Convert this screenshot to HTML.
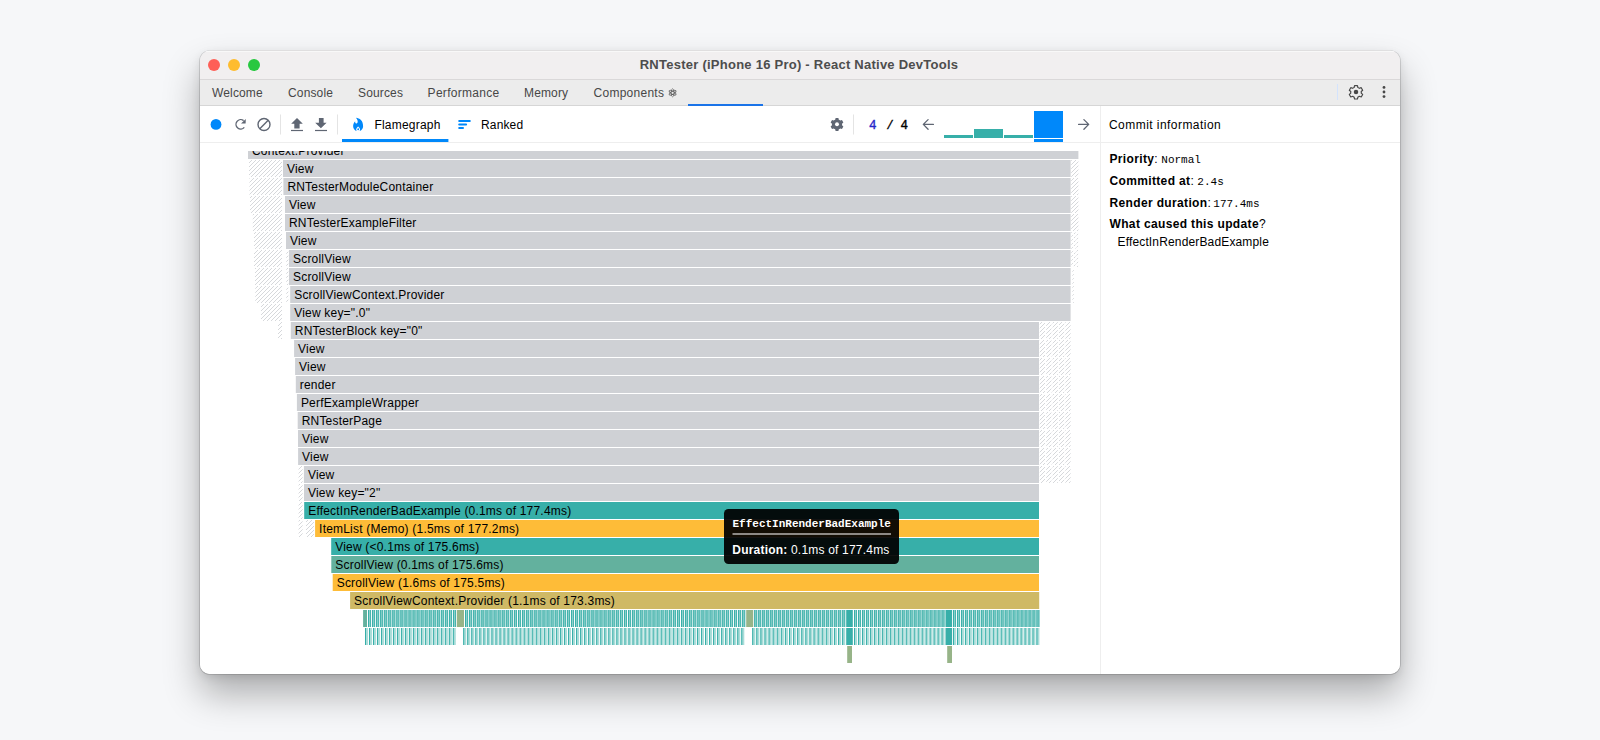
<!DOCTYPE html>
<html><head><meta charset="utf-8"><title>RNTester - React Native DevTools</title>
<style>
html,body{margin:0;padding:0;}
body{width:1600px;height:740px;overflow:hidden;background:#f6f7f9;position:relative;font-family:"Liberation Sans", sans-serif;}
.win{position:absolute;left:200px;top:50.5px;width:1200px;height:623.5px;border-radius:10px;background:#fff;
 box-shadow:0 0 0 0.8px rgba(0,0,0,.16), 0 20px 36px rgba(0,0,0,.30), 0 3px 10px rgba(0,0,0,.10);}
svg.main{position:absolute;left:0;top:0;}
svg text{font-family:"Liberation Sans", sans-serif;}
.fl{font-size:12px;fill:#000;letter-spacing:0.2px;}
.tab{font-size:12px;fill:#474747;letter-spacing:0.15px;}
.tb{font-size:12px;fill:#000;letter-spacing:0.15px;}
.b{font-weight:bold;letter-spacing:0.35px;}
.mono{font-family:"Liberation Mono", monospace;}
</style></head><body>
<div class="win"></div>
<svg class="main" width="1600" height="740" viewBox="0 0 1600 740">
<defs>
<clipPath id="winclip"><rect x="200" y="50.5" width="1200" height="623.5" rx="10" ry="10"/></clipPath>
<pattern id="thin1" patternUnits="userSpaceOnUse" x="363.1" y="0" width="4.05" height="17">
<rect x="0" y="0" width="3.1" height="17" fill="#8fd0cb"/><rect x="0" y="0" width="1" height="17" fill="#37afa9"/><rect x="2.1" y="0" width="1" height="17" fill="#45b4ae"/></pattern>
<pattern id="thin2" patternUnits="userSpaceOnUse" x="365" y="0" width="4.05" height="17">
<rect x="0" y="0" width="3.1" height="17" fill="#b9e3e0"/><rect x="0" y="0" width="1" height="17" fill="#37afa9"/><rect x="2.2" y="0" width="0.9" height="17" fill="#7ccac5"/></pattern>
</defs>
<g clip-path="url(#winclip)">
<!-- title bar -->
<rect x="200" y="50" width="1200" height="29" fill="#f1eff0"/>
<rect x="200" y="51" width="1200" height="0.8" fill="#fbfafb"/>
<rect x="200" y="79" width="1200" height="1" fill="#dad8d9"/>
<circle cx="214" cy="65" r="6" fill="#fe5f57"/>
<circle cx="234" cy="65" r="6" fill="#febc2e"/>
<circle cx="254" cy="65" r="6" fill="#28c840"/>
<text x="799" y="69" text-anchor="middle" font-size="13" font-weight="bold" fill="#4d4d4d" style="letter-spacing:0.25px">RNTester (iPhone 16 Pro) - React Native DevTools</text>
<!-- tab strip -->
<rect x="200" y="80" width="1200" height="25" fill="#ececec"/>
<rect x="200" y="105" width="1200" height="1" fill="#d6d6d6"/>
<text x="212" y="96.5" class="tab">Welcome</text>
<text x="288" y="96.5" class="tab">Console</text>
<text x="358" y="96.5" class="tab">Sources</text>
<text x="427.6" y="96.5" class="tab" style="letter-spacing:0.3px">Performance</text>
<text x="524" y="96.5" class="tab">Memory</text>
<text x="593.6" y="96.5" class="tab" style="letter-spacing:0.25px">Components</text>
<g transform="translate(672.6,92.8)" stroke="#5a5a5a" stroke-width="0.75" fill="none">
<ellipse rx="4" ry="1.5" transform="rotate(90)"/><ellipse rx="4" ry="1.5" transform="rotate(30)"/><ellipse rx="4" ry="1.5" transform="rotate(-30)"/></g>
<rect x="688" y="104" width="75" height="2" fill="#1a73e8"/>
<rect x="1337" y="84" width="1" height="16" fill="#d3e3fd"/>
<!-- settings gear (outline) -->
<g transform="translate(1356,91.9) scale(0.9)">
<path d="M-1.6,-7 h3.2 l0.5,2.1 a5.2,5.2 0 0 1 1.6,0.9 l2.1,-0.7 l1.6,2.8 l-1.6,1.4 a5.2,5.2 0 0 1 0,1.9 l1.6,1.4 l-1.6,2.8 l-2.1,-0.7 a5.2,5.2 0 0 1 -1.6,0.9 l-0.5,2.1 h-3.2 l-0.5,-2.1 a5.2,5.2 0 0 1 -1.6,-0.9 l-2.1,0.7 l-1.6,-2.8 l1.6,-1.4 a5.2,5.2 0 0 1 0,-1.9 l-1.6,-1.4 l1.6,-2.8 l2.1,0.7 a5.2,5.2 0 0 1 1.6,-0.9 z" fill="none" stroke="#474747" stroke-width="1.3" stroke-linejoin="round"/>
<circle r="2.5" fill="#474747"/></g>
<circle cx="1384" cy="87.4" r="1.4" fill="#474747"/>
<circle cx="1384" cy="92" r="1.4" fill="#474747"/>
<circle cx="1384" cy="96.6" r="1.4" fill="#474747"/>
<!-- content bg -->
<rect x="200" y="106" width="1200" height="568" fill="#fff"/>
<rect x="200" y="142" width="1200" height="1" fill="#eeeeee"/>
<rect x="1100" y="106" width="1" height="568" fill="#eeeeee"/>
<!-- toolbar -->
<circle cx="216" cy="124.4" r="5.4" fill="#0088fa"/>
<g fill="none" stroke="#5f6673" stroke-width="1.4">
<path d="M243.6,120.6 A4.7,4.7 0 1 0 244.3,127.4"/>
</g>
<path d="M245.8,118.9 L245.6,123.6 L241,123.6 Z" fill="#5f6673"/>
<g fill="none" stroke="#5f6673" stroke-width="1.4">
<circle cx="264" cy="124.5" r="6"/>
<path d="M268.2,120.3 L259.8,128.7"/>
</g>
<rect x="280" y="114.5" width="1" height="20" fill="#e4e4e4"/>
<g fill="#5f6673"><path d="M291.2,123.8 L297,118 L302.8,123.8 H299.6 V128.6 H294.3 V123.8 Z"/><rect x="291" y="129.9" width="12" height="1.2"/>
<path d="M318.9,118 H323.6 V122.8 H326.6 L320.9,128.2 L315.2,122.8 H318.9 Z"/><rect x="315" y="129.9" width="12" height="1.2"/></g>
<rect x="337" y="114.5" width="1" height="20" fill="#e4e4e4"/>
<g transform="translate(349.6,116.1) scale(0.71,0.69)" fill="#0088fa"><path d="M10.0650893,21.5040462 C7.14020814,20.6850349 5,18.0558698 5,14.9390244 C5,14.017627 5,9.81707317 7.83333333,7.37804878 C7.83333333,7.37804878 7.58333333,11.199187 10,10.6300813 C11.125,10.326087 13.0062497,7.63043487 8.91666667,2.5 C14.1666667,3.06910569 19,6.10431725 19,14.9390244 C19,18.0558698 16.8597919,20.6850349 13.9349107,21.5040462 C14.454014,21.0118505 14.7765152,20.3233394 14.7765152,19.5613412 C14.7765152,17.2826087 12,15.0875871 12,15.0875871 C12,15.0875871 9.22348485,17.2826087 9.22348485,19.5613412 C9.22348485,20.3233394 9.54598603,21.0118505 10.0650893,21.5040462 Z M12.0833333,20.6514763 C11.3814715,20.6514763 10.8125,20.1226027 10.8125,19.4702042 C10.8125,18.6069669 12.0833333,16.9347829 12.0833333,16.9347829 C12.0833333,16.9347829 13.3541667,18.6069669 13.3541667,19.4702042 C13.3541667,20.1226027 12.7851952,20.6514763 12.0833333,20.6514763 Z"/></g>
<text x="374.4" y="128.8" class="tb" style="letter-spacing:0.22px">Flamegraph</text>
<rect x="342" y="139" width="106.4" height="3" fill="#0088fa"/>
<g fill="#0088fa">
<rect x="458.2" y="119.9" width="12.6" height="2" rx="1"/>
<rect x="458.2" y="123.4" width="8.9" height="2" rx="1"/>
<rect x="458.2" y="127" width="5.8" height="2" rx="1"/>
</g>
<text x="481" y="128.8" class="tb">Ranked</text>
<!-- right toolbar -->
<g transform="translate(837,124.2) scale(0.93)">
<path d="M-1.5,-6.6 h3 l0.45,1.9 a4.9,4.9 0 0 1 1.5,0.85 l1.9,-0.6 l1.5,2.6 l-1.45,1.3 a4.9,4.9 0 0 1 0,1.75 l1.45,1.3 l-1.5,2.6 l-1.9,-0.6 a4.9,4.9 0 0 1 -1.5,0.85 l-0.45,1.9 h-3 l-0.45,-1.9 a4.9,4.9 0 0 1 -1.5,-0.85 l-1.9,0.6 l-1.5,-2.6 l1.45,-1.3 a4.9,4.9 0 0 1 0,-1.75 l-1.45,-1.3 l1.5,-2.6 l1.9,0.6 a4.9,4.9 0 0 1 1.5,-0.85 z" fill="#5f6673"/>
<circle r="2.1" fill="#fff"/></g>
<rect x="853" y="114.5" width="1" height="20" fill="#e4e4e4"/>
<text x="868.9" y="128.9" class="mono" font-size="12.5" fill="#2626c9" stroke="#2626c9" stroke-width="0.35">4</text>
<text x="886.2" y="129.4" class="mono" font-size="12.5" fill="#000" stroke="#000" stroke-width="0.3">/</text>
<text x="900.6" y="128.9" class="mono" font-size="12.5" fill="#000" stroke="#000" stroke-width="0.35">4</text>
<g fill="none" stroke="#5f6673" stroke-width="1.3" stroke-linecap="round" stroke-linejoin="round">
<path d="M933.4,124.4 H923.4 M928.1,119.6 L923.3,124.4 L928.1,129.2"/>
<path d="M1078.6,124.4 H1088.6 M1083.9,119.6 L1088.7,124.4 L1083.9,129.2"/>
</g>
<rect x="944" y="135" width="29" height="3" fill="#37afa9"/>
<rect x="974" y="129" width="29" height="9" fill="#37afa9"/>
<rect x="1004" y="135" width="29" height="3" fill="#37afa9"/>
<rect x="1034" y="111" width="29" height="27" fill="#0088fa"/>
<rect x="1034" y="139" width="29" height="3" fill="#0088fa"/>
<!-- right panel -->
<text x="1109" y="129" class="tb" style="letter-spacing:0.45px">Commit information</text>
<text x="1109.5" y="162.5" class="tb"><tspan class="b">Priority</tspan>: <tspan class="mono" font-size="11" style="letter-spacing:0">Normal</tspan></text>
<text x="1109.5" y="184.5" class="tb"><tspan class="b">Committed at</tspan>: <tspan class="mono" font-size="11" style="letter-spacing:0">2.4s</tspan></text>
<text x="1109.5" y="206.5" class="tb"><tspan class="b">Render duration</tspan>:<tspan class="mono" font-size="11" style="letter-spacing:0" dx="2.4">177.4ms</tspan></text>
<text x="1109.5" y="228" class="tb"><tspan class="b">What caused this update</tspan>?</text>
<text x="1117.5" y="246" class="tb">EffectInRenderBadExample</text>
<defs><pattern id="hp" patternUnits="userSpaceOnUse" width="4" height="4"><path d="M-1,1 l2,-2 M0,4 l4,-4 M3,5 l2,-2" stroke="#d6d8db" stroke-width="1"/></pattern><clipPath id="fgclip"><rect x="200" y="151" width="900" height="523"/></clipPath></defs>
<g clip-path="url(#fgclip)">
<rect x="249" y="160" width="33.00" height="17" fill="url(#hp)"/>
<rect x="249.5" y="178" width="32.50" height="17" fill="url(#hp)"/>
<rect x="250" y="196" width="32.00" height="17" fill="url(#hp)"/>
<rect x="252.8" y="214" width="29.20" height="17" fill="url(#hp)"/>
<rect x="254" y="232" width="28.00" height="17" fill="url(#hp)"/>
<rect x="254" y="250" width="28.00" height="17" fill="url(#hp)"/>
<rect x="255" y="268" width="27.00" height="17" fill="url(#hp)"/>
<rect x="255.3" y="286" width="26.70" height="17" fill="url(#hp)"/>
<rect x="261" y="304" width="21.00" height="17" fill="url(#hp)"/>
<rect x="278" y="322" width="4.00" height="17" fill="url(#hp)"/>
<rect x="286.3" y="250" width="2.00" height="17" fill="url(#hp)"/>
<rect x="286.3" y="268" width="2.00" height="17" fill="url(#hp)"/>
<rect x="286.3" y="286" width="2.00" height="17" fill="url(#hp)"/>
<rect x="1071.2" y="160" width="7.20" height="17" fill="url(#hp)"/>
<rect x="1071.2" y="178" width="7.20" height="17" fill="url(#hp)"/>
<rect x="1071.2" y="196" width="7.20" height="17" fill="url(#hp)"/>
<rect x="1071.2" y="214" width="7.20" height="17" fill="url(#hp)"/>
<rect x="1071.3" y="232" width="1.60" height="17" fill="url(#hp)"/>
<rect x="1073.9" y="232" width="1.60" height="17" fill="url(#hp)"/>
<rect x="1076.5" y="232" width="1.60" height="17" fill="url(#hp)"/>
<rect x="1071.3" y="250" width="1.60" height="17" fill="url(#hp)"/>
<rect x="1073.9" y="250" width="1.60" height="17" fill="url(#hp)"/>
<rect x="1076.5" y="250" width="1.60" height="17" fill="url(#hp)"/>
<rect x="1072.4" y="268" width="1.40" height="17" fill="url(#hp)"/>
<rect x="1072.4" y="286" width="1.40" height="17" fill="url(#hp)"/>
<rect x="1039.8" y="322" width="5.20" height="17" fill="url(#hp)"/>
<rect x="1046.2" y="322" width="5.20" height="17" fill="url(#hp)"/>
<rect x="1052.6" y="322" width="5.20" height="17" fill="url(#hp)"/>
<rect x="1059" y="322" width="5.20" height="17" fill="url(#hp)"/>
<rect x="1065.4" y="322" width="5.20" height="17" fill="url(#hp)"/>
<rect x="1039.8" y="340" width="5.20" height="17" fill="url(#hp)"/>
<rect x="1046.2" y="340" width="5.20" height="17" fill="url(#hp)"/>
<rect x="1052.6" y="340" width="5.20" height="17" fill="url(#hp)"/>
<rect x="1059" y="340" width="5.20" height="17" fill="url(#hp)"/>
<rect x="1065.4" y="340" width="5.20" height="17" fill="url(#hp)"/>
<rect x="1039.8" y="358" width="5.20" height="17" fill="url(#hp)"/>
<rect x="1046.2" y="358" width="5.20" height="17" fill="url(#hp)"/>
<rect x="1052.6" y="358" width="5.20" height="17" fill="url(#hp)"/>
<rect x="1059" y="358" width="5.20" height="17" fill="url(#hp)"/>
<rect x="1065.4" y="358" width="5.20" height="17" fill="url(#hp)"/>
<rect x="1039.8" y="376" width="5.20" height="17" fill="url(#hp)"/>
<rect x="1046.2" y="376" width="5.20" height="17" fill="url(#hp)"/>
<rect x="1052.6" y="376" width="5.20" height="17" fill="url(#hp)"/>
<rect x="1059" y="376" width="5.20" height="17" fill="url(#hp)"/>
<rect x="1065.4" y="376" width="5.20" height="17" fill="url(#hp)"/>
<rect x="1039.8" y="394" width="5.20" height="17" fill="url(#hp)"/>
<rect x="1046.2" y="394" width="5.20" height="17" fill="url(#hp)"/>
<rect x="1052.6" y="394" width="5.20" height="17" fill="url(#hp)"/>
<rect x="1059" y="394" width="5.20" height="17" fill="url(#hp)"/>
<rect x="1065.4" y="394" width="5.20" height="17" fill="url(#hp)"/>
<rect x="1039.8" y="412" width="5.20" height="17" fill="url(#hp)"/>
<rect x="1046.2" y="412" width="5.20" height="17" fill="url(#hp)"/>
<rect x="1052.6" y="412" width="5.20" height="17" fill="url(#hp)"/>
<rect x="1059" y="412" width="5.20" height="17" fill="url(#hp)"/>
<rect x="1065.4" y="412" width="5.20" height="17" fill="url(#hp)"/>
<rect x="1039.8" y="430" width="5.20" height="17" fill="url(#hp)"/>
<rect x="1046.2" y="430" width="5.20" height="17" fill="url(#hp)"/>
<rect x="1052.6" y="430" width="5.20" height="17" fill="url(#hp)"/>
<rect x="1059" y="430" width="5.20" height="17" fill="url(#hp)"/>
<rect x="1065.4" y="430" width="5.20" height="17" fill="url(#hp)"/>
<rect x="1039.8" y="448" width="5.20" height="17" fill="url(#hp)"/>
<rect x="1046.2" y="448" width="5.20" height="17" fill="url(#hp)"/>
<rect x="1052.6" y="448" width="5.20" height="17" fill="url(#hp)"/>
<rect x="1059" y="448" width="5.20" height="17" fill="url(#hp)"/>
<rect x="1065.4" y="448" width="5.20" height="17" fill="url(#hp)"/>
<rect x="1039.8" y="466" width="5.20" height="17" fill="url(#hp)"/>
<rect x="1046.2" y="466" width="5.20" height="17" fill="url(#hp)"/>
<rect x="1052.6" y="466" width="5.20" height="17" fill="url(#hp)"/>
<rect x="1059" y="466" width="5.20" height="17" fill="url(#hp)"/>
<rect x="1065.4" y="466" width="5.20" height="17" fill="url(#hp)"/>
<rect x="298.6" y="466" width="4.00" height="17" fill="url(#hp)"/>
<rect x="298.6" y="484" width="4.00" height="17" fill="url(#hp)"/>
<rect x="298.6" y="502" width="4.00" height="17" fill="url(#hp)"/>
<rect x="298.6" y="520" width="4.00" height="17" fill="url(#hp)"/>
<rect x="306" y="520" width="8.00" height="17" fill="url(#hp)"/>
<rect x="248" y="142" width="830.40" height="17" fill="#cfd1d5"/>
<text x="252.00" y="154.60" class="fl">Context.Provider</text>
<rect x="283" y="160" width="787.60" height="17" fill="#cfd1d5"/>
<text x="287.00" y="172.60" class="fl">View</text>
<rect x="283.4" y="178" width="787.20" height="17" fill="#cfd1d5"/>
<text x="287.40" y="190.60" class="fl">RNTesterModuleContainer</text>
<rect x="285" y="196" width="785.60" height="17" fill="#cfd1d5"/>
<text x="289.00" y="208.60" class="fl">View</text>
<rect x="285" y="214" width="785.60" height="17" fill="#cfd1d5"/>
<text x="289.00" y="226.60" class="fl">RNTesterExampleFilter</text>
<rect x="286" y="232" width="784.60" height="17" fill="#cfd1d5"/>
<text x="290.00" y="244.60" class="fl">View</text>
<rect x="289" y="250" width="781.60" height="17" fill="#cfd1d5"/>
<text x="293.00" y="262.60" class="fl">ScrollView</text>
<rect x="289" y="268" width="781.60" height="17" fill="#cfd1d5"/>
<text x="293.00" y="280.60" class="fl">ScrollView</text>
<rect x="290.2" y="286" width="780.40" height="17" fill="#cfd1d5"/>
<text x="294.20" y="298.60" class="fl">ScrollViewContext.Provider</text>
<rect x="290.2" y="304" width="780.40" height="17" fill="#cfd1d5"/>
<text x="294.20" y="316.60" class="fl">View key=&quot;.0&quot;</text>
<rect x="290.8" y="322" width="748.20" height="17" fill="#cfd1d5"/>
<text x="294.80" y="334.60" class="fl">RNTesterBlock key=&quot;0&quot;</text>
<rect x="294.1" y="340" width="744.90" height="17" fill="#cfd1d5"/>
<text x="298.10" y="352.60" class="fl">View</text>
<rect x="295.1" y="358" width="743.90" height="17" fill="#cfd1d5"/>
<text x="299.10" y="370.60" class="fl">View</text>
<rect x="295.8" y="376" width="743.20" height="17" fill="#cfd1d5"/>
<text x="299.80" y="388.60" class="fl">render</text>
<rect x="296.9" y="394" width="742.10" height="17" fill="#cfd1d5"/>
<text x="300.90" y="406.60" class="fl">PerfExampleWrapper</text>
<rect x="297.7" y="412" width="741.30" height="17" fill="#cfd1d5"/>
<text x="301.70" y="424.60" class="fl">RNTesterPage</text>
<rect x="298" y="430" width="741.00" height="17" fill="#cfd1d5"/>
<text x="302.00" y="442.60" class="fl">View</text>
<rect x="298.1" y="448" width="740.90" height="17" fill="#cfd1d5"/>
<text x="302.10" y="460.60" class="fl">View</text>
<rect x="303.9" y="466" width="735.10" height="17" fill="#cfd1d5"/>
<text x="307.90" y="478.60" class="fl">View</text>
<rect x="304" y="484" width="735.00" height="17" fill="#cfd1d5"/>
<text x="308.00" y="496.60" class="fl">View key=&quot;2&quot;</text>
<rect x="304.2" y="502" width="734.80" height="17" fill="#37afa9"/>
<text x="308.20" y="514.60" class="fl">EffectInRenderBadExample (0.1ms of 177.4ms)</text>
<rect x="315.1" y="520" width="723.90" height="17" fill="#febc38"/>
<text x="319.10" y="532.60" class="fl">ItemList (Memo) (1.5ms of 177.2ms)</text>
<rect x="331.2" y="538" width="707.80" height="17" fill="#37afa9"/>
<text x="335.20" y="550.60" class="fl">View (&lt;0.1ms of 175.6ms)</text>
<rect x="331.3" y="556" width="707.70" height="17" fill="#63b19e"/>
<text x="335.30" y="568.60" class="fl">ScrollView (0.1ms of 175.6ms)</text>
<rect x="332.7" y="574" width="706.30" height="17" fill="#febc38"/>
<text x="336.70" y="586.60" class="fl">ScrollView (1.6ms of 175.5ms)</text>
<rect x="350.1" y="592" width="689.10" height="17" fill="#cfb965"/>
<text x="354.10" y="604.60" class="fl">ScrollViewContext.Provider (1.1ms of 173.3ms)</text>
<rect x="368.00" y="610" width="3.05" height="17" fill="#8fd0cb"/>
<rect x="368.00" y="610" width="1" height="17" fill="#37afa9"/>
<rect x="370.05" y="610" width="1" height="17" fill="#45b4ae"/>
<rect x="372.05" y="610" width="3.05" height="17" fill="#8fd0cb"/>
<rect x="372.05" y="610" width="1" height="17" fill="#37afa9"/>
<rect x="374.09" y="610" width="1" height="17" fill="#45b4ae"/>
<rect x="376.09" y="610" width="3.05" height="17" fill="#8fd0cb"/>
<rect x="376.09" y="610" width="1" height="17" fill="#37afa9"/>
<rect x="378.14" y="610" width="1" height="17" fill="#45b4ae"/>
<rect x="380.14" y="610" width="3.05" height="17" fill="#8fd0cb"/>
<rect x="380.14" y="610" width="1" height="17" fill="#37afa9"/>
<rect x="382.18" y="610" width="1" height="17" fill="#45b4ae"/>
<rect x="384.18" y="610" width="3.05" height="17" fill="#8fd0cb"/>
<rect x="384.18" y="610" width="1" height="17" fill="#37afa9"/>
<rect x="386.23" y="610" width="1" height="17" fill="#45b4ae"/>
<rect x="388.23" y="610" width="3.05" height="17" fill="#8fd0cb"/>
<rect x="388.23" y="610" width="1" height="17" fill="#37afa9"/>
<rect x="390.27" y="610" width="1" height="17" fill="#45b4ae"/>
<rect x="392.27" y="610" width="3.05" height="17" fill="#8fd0cb"/>
<rect x="392.27" y="610" width="1" height="17" fill="#37afa9"/>
<rect x="394.32" y="610" width="1" height="17" fill="#45b4ae"/>
<rect x="396.32" y="610" width="3.05" height="17" fill="#8fd0cb"/>
<rect x="396.32" y="610" width="1" height="17" fill="#37afa9"/>
<rect x="398.36" y="610" width="1" height="17" fill="#45b4ae"/>
<rect x="400.36" y="610" width="3.05" height="17" fill="#8fd0cb"/>
<rect x="400.36" y="610" width="1" height="17" fill="#37afa9"/>
<rect x="402.41" y="610" width="1" height="17" fill="#45b4ae"/>
<rect x="404.41" y="610" width="3.05" height="17" fill="#8fd0cb"/>
<rect x="404.41" y="610" width="1" height="17" fill="#37afa9"/>
<rect x="406.45" y="610" width="1" height="17" fill="#45b4ae"/>
<rect x="408.45" y="610" width="3.05" height="17" fill="#8fd0cb"/>
<rect x="408.45" y="610" width="1" height="17" fill="#37afa9"/>
<rect x="410.50" y="610" width="1" height="17" fill="#45b4ae"/>
<rect x="412.50" y="610" width="3.05" height="17" fill="#8fd0cb"/>
<rect x="412.50" y="610" width="1" height="17" fill="#37afa9"/>
<rect x="414.55" y="610" width="1" height="17" fill="#45b4ae"/>
<rect x="416.55" y="610" width="3.05" height="17" fill="#8fd0cb"/>
<rect x="416.55" y="610" width="1" height="17" fill="#37afa9"/>
<rect x="418.59" y="610" width="1" height="17" fill="#45b4ae"/>
<rect x="420.59" y="610" width="3.05" height="17" fill="#8fd0cb"/>
<rect x="420.59" y="610" width="1" height="17" fill="#37afa9"/>
<rect x="422.64" y="610" width="1" height="17" fill="#45b4ae"/>
<rect x="424.64" y="610" width="3.05" height="17" fill="#8fd0cb"/>
<rect x="424.64" y="610" width="1" height="17" fill="#37afa9"/>
<rect x="426.68" y="610" width="1" height="17" fill="#45b4ae"/>
<rect x="428.68" y="610" width="3.05" height="17" fill="#8fd0cb"/>
<rect x="428.68" y="610" width="1" height="17" fill="#37afa9"/>
<rect x="430.73" y="610" width="1" height="17" fill="#45b4ae"/>
<rect x="432.73" y="610" width="3.05" height="17" fill="#8fd0cb"/>
<rect x="432.73" y="610" width="1" height="17" fill="#37afa9"/>
<rect x="434.77" y="610" width="1" height="17" fill="#45b4ae"/>
<rect x="436.77" y="610" width="3.05" height="17" fill="#8fd0cb"/>
<rect x="436.77" y="610" width="1" height="17" fill="#37afa9"/>
<rect x="438.82" y="610" width="1" height="17" fill="#45b4ae"/>
<rect x="440.82" y="610" width="3.05" height="17" fill="#8fd0cb"/>
<rect x="440.82" y="610" width="1" height="17" fill="#37afa9"/>
<rect x="442.86" y="610" width="1" height="17" fill="#45b4ae"/>
<rect x="444.86" y="610" width="3.05" height="17" fill="#8fd0cb"/>
<rect x="444.86" y="610" width="1" height="17" fill="#37afa9"/>
<rect x="446.91" y="610" width="1" height="17" fill="#45b4ae"/>
<rect x="448.91" y="610" width="3.05" height="17" fill="#8fd0cb"/>
<rect x="448.91" y="610" width="1" height="17" fill="#37afa9"/>
<rect x="450.95" y="610" width="1" height="17" fill="#45b4ae"/>
<rect x="452.95" y="610" width="3.05" height="17" fill="#8fd0cb"/>
<rect x="452.95" y="610" width="1" height="17" fill="#37afa9"/>
<rect x="455.00" y="610" width="1" height="17" fill="#45b4ae"/>
<rect x="465.00" y="610" width="3.08" height="17" fill="#8fd0cb"/>
<rect x="465.00" y="610" width="1" height="17" fill="#37afa9"/>
<rect x="467.08" y="610" width="1" height="17" fill="#45b4ae"/>
<rect x="469.08" y="610" width="3.08" height="17" fill="#8fd0cb"/>
<rect x="469.08" y="610" width="1" height="17" fill="#37afa9"/>
<rect x="471.15" y="610" width="1" height="17" fill="#45b4ae"/>
<rect x="473.15" y="610" width="3.08" height="17" fill="#8fd0cb"/>
<rect x="473.15" y="610" width="1" height="17" fill="#37afa9"/>
<rect x="475.23" y="610" width="1" height="17" fill="#45b4ae"/>
<rect x="477.23" y="610" width="3.08" height="17" fill="#8fd0cb"/>
<rect x="477.23" y="610" width="1" height="17" fill="#37afa9"/>
<rect x="479.30" y="610" width="1" height="17" fill="#45b4ae"/>
<rect x="481.30" y="610" width="3.08" height="17" fill="#8fd0cb"/>
<rect x="481.30" y="610" width="1" height="17" fill="#37afa9"/>
<rect x="483.38" y="610" width="1" height="17" fill="#45b4ae"/>
<rect x="485.38" y="610" width="3.08" height="17" fill="#8fd0cb"/>
<rect x="485.38" y="610" width="1" height="17" fill="#37afa9"/>
<rect x="487.45" y="610" width="1" height="17" fill="#45b4ae"/>
<rect x="489.45" y="610" width="3.08" height="17" fill="#8fd0cb"/>
<rect x="489.45" y="610" width="1" height="17" fill="#37afa9"/>
<rect x="491.53" y="610" width="1" height="17" fill="#45b4ae"/>
<rect x="493.53" y="610" width="3.08" height="17" fill="#8fd0cb"/>
<rect x="493.53" y="610" width="1" height="17" fill="#37afa9"/>
<rect x="495.60" y="610" width="1" height="17" fill="#45b4ae"/>
<rect x="497.60" y="610" width="3.08" height="17" fill="#8fd0cb"/>
<rect x="497.60" y="610" width="1" height="17" fill="#37afa9"/>
<rect x="499.68" y="610" width="1" height="17" fill="#45b4ae"/>
<rect x="501.68" y="610" width="3.08" height="17" fill="#8fd0cb"/>
<rect x="501.68" y="610" width="1" height="17" fill="#37afa9"/>
<rect x="503.75" y="610" width="1" height="17" fill="#45b4ae"/>
<rect x="505.75" y="610" width="3.08" height="17" fill="#8fd0cb"/>
<rect x="505.75" y="610" width="1" height="17" fill="#37afa9"/>
<rect x="507.83" y="610" width="1" height="17" fill="#45b4ae"/>
<rect x="509.83" y="610" width="3.08" height="17" fill="#8fd0cb"/>
<rect x="509.83" y="610" width="1" height="17" fill="#37afa9"/>
<rect x="511.90" y="610" width="1" height="17" fill="#45b4ae"/>
<rect x="513.90" y="610" width="3.08" height="17" fill="#8fd0cb"/>
<rect x="513.90" y="610" width="1" height="17" fill="#37afa9"/>
<rect x="515.98" y="610" width="1" height="17" fill="#45b4ae"/>
<rect x="517.98" y="610" width="3.08" height="17" fill="#8fd0cb"/>
<rect x="517.98" y="610" width="1" height="17" fill="#37afa9"/>
<rect x="520.06" y="610" width="1" height="17" fill="#45b4ae"/>
<rect x="522.06" y="610" width="3.08" height="17" fill="#8fd0cb"/>
<rect x="522.06" y="610" width="1" height="17" fill="#37afa9"/>
<rect x="524.13" y="610" width="1" height="17" fill="#45b4ae"/>
<rect x="526.13" y="610" width="3.08" height="17" fill="#8fd0cb"/>
<rect x="526.13" y="610" width="1" height="17" fill="#37afa9"/>
<rect x="528.21" y="610" width="1" height="17" fill="#45b4ae"/>
<rect x="530.21" y="610" width="3.08" height="17" fill="#8fd0cb"/>
<rect x="530.21" y="610" width="1" height="17" fill="#37afa9"/>
<rect x="532.28" y="610" width="1" height="17" fill="#45b4ae"/>
<rect x="534.28" y="610" width="3.08" height="17" fill="#8fd0cb"/>
<rect x="534.28" y="610" width="1" height="17" fill="#37afa9"/>
<rect x="536.36" y="610" width="1" height="17" fill="#45b4ae"/>
<rect x="538.36" y="610" width="3.08" height="17" fill="#8fd0cb"/>
<rect x="538.36" y="610" width="1" height="17" fill="#37afa9"/>
<rect x="540.43" y="610" width="1" height="17" fill="#45b4ae"/>
<rect x="542.43" y="610" width="3.08" height="17" fill="#8fd0cb"/>
<rect x="542.43" y="610" width="1" height="17" fill="#37afa9"/>
<rect x="544.51" y="610" width="1" height="17" fill="#45b4ae"/>
<rect x="546.51" y="610" width="3.08" height="17" fill="#8fd0cb"/>
<rect x="546.51" y="610" width="1" height="17" fill="#37afa9"/>
<rect x="548.58" y="610" width="1" height="17" fill="#45b4ae"/>
<rect x="550.58" y="610" width="3.08" height="17" fill="#8fd0cb"/>
<rect x="550.58" y="610" width="1" height="17" fill="#37afa9"/>
<rect x="552.66" y="610" width="1" height="17" fill="#45b4ae"/>
<rect x="554.66" y="610" width="3.08" height="17" fill="#8fd0cb"/>
<rect x="554.66" y="610" width="1" height="17" fill="#37afa9"/>
<rect x="556.73" y="610" width="1" height="17" fill="#45b4ae"/>
<rect x="558.73" y="610" width="3.08" height="17" fill="#8fd0cb"/>
<rect x="558.73" y="610" width="1" height="17" fill="#37afa9"/>
<rect x="560.81" y="610" width="1" height="17" fill="#45b4ae"/>
<rect x="562.81" y="610" width="3.08" height="17" fill="#8fd0cb"/>
<rect x="562.81" y="610" width="1" height="17" fill="#37afa9"/>
<rect x="564.88" y="610" width="1" height="17" fill="#45b4ae"/>
<rect x="566.88" y="610" width="3.08" height="17" fill="#8fd0cb"/>
<rect x="566.88" y="610" width="1" height="17" fill="#37afa9"/>
<rect x="568.96" y="610" width="1" height="17" fill="#45b4ae"/>
<rect x="570.96" y="610" width="3.08" height="17" fill="#8fd0cb"/>
<rect x="570.96" y="610" width="1" height="17" fill="#37afa9"/>
<rect x="573.03" y="610" width="1" height="17" fill="#45b4ae"/>
<rect x="575.03" y="610" width="3.08" height="17" fill="#8fd0cb"/>
<rect x="575.03" y="610" width="1" height="17" fill="#37afa9"/>
<rect x="577.11" y="610" width="1" height="17" fill="#45b4ae"/>
<rect x="579.11" y="610" width="3.08" height="17" fill="#8fd0cb"/>
<rect x="579.11" y="610" width="1" height="17" fill="#37afa9"/>
<rect x="581.19" y="610" width="1" height="17" fill="#45b4ae"/>
<rect x="583.19" y="610" width="3.08" height="17" fill="#8fd0cb"/>
<rect x="583.19" y="610" width="1" height="17" fill="#37afa9"/>
<rect x="585.26" y="610" width="1" height="17" fill="#45b4ae"/>
<rect x="587.26" y="610" width="3.08" height="17" fill="#8fd0cb"/>
<rect x="587.26" y="610" width="1" height="17" fill="#37afa9"/>
<rect x="589.34" y="610" width="1" height="17" fill="#45b4ae"/>
<rect x="591.34" y="610" width="3.08" height="17" fill="#8fd0cb"/>
<rect x="591.34" y="610" width="1" height="17" fill="#37afa9"/>
<rect x="593.41" y="610" width="1" height="17" fill="#45b4ae"/>
<rect x="595.41" y="610" width="3.08" height="17" fill="#8fd0cb"/>
<rect x="595.41" y="610" width="1" height="17" fill="#37afa9"/>
<rect x="597.49" y="610" width="1" height="17" fill="#45b4ae"/>
<rect x="599.49" y="610" width="3.08" height="17" fill="#8fd0cb"/>
<rect x="599.49" y="610" width="1" height="17" fill="#37afa9"/>
<rect x="601.56" y="610" width="1" height="17" fill="#45b4ae"/>
<rect x="603.56" y="610" width="3.08" height="17" fill="#8fd0cb"/>
<rect x="603.56" y="610" width="1" height="17" fill="#37afa9"/>
<rect x="605.64" y="610" width="1" height="17" fill="#45b4ae"/>
<rect x="607.64" y="610" width="3.08" height="17" fill="#8fd0cb"/>
<rect x="607.64" y="610" width="1" height="17" fill="#37afa9"/>
<rect x="609.71" y="610" width="1" height="17" fill="#45b4ae"/>
<rect x="611.71" y="610" width="3.08" height="17" fill="#8fd0cb"/>
<rect x="611.71" y="610" width="1" height="17" fill="#37afa9"/>
<rect x="613.79" y="610" width="1" height="17" fill="#45b4ae"/>
<rect x="615.79" y="610" width="3.08" height="17" fill="#8fd0cb"/>
<rect x="615.79" y="610" width="1" height="17" fill="#37afa9"/>
<rect x="617.86" y="610" width="1" height="17" fill="#45b4ae"/>
<rect x="619.86" y="610" width="3.08" height="17" fill="#8fd0cb"/>
<rect x="619.86" y="610" width="1" height="17" fill="#37afa9"/>
<rect x="621.94" y="610" width="1" height="17" fill="#45b4ae"/>
<rect x="623.94" y="610" width="3.08" height="17" fill="#8fd0cb"/>
<rect x="623.94" y="610" width="1" height="17" fill="#37afa9"/>
<rect x="626.01" y="610" width="1" height="17" fill="#45b4ae"/>
<rect x="628.01" y="610" width="3.08" height="17" fill="#8fd0cb"/>
<rect x="628.01" y="610" width="1" height="17" fill="#37afa9"/>
<rect x="630.09" y="610" width="1" height="17" fill="#45b4ae"/>
<rect x="632.09" y="610" width="3.08" height="17" fill="#8fd0cb"/>
<rect x="632.09" y="610" width="1" height="17" fill="#37afa9"/>
<rect x="634.17" y="610" width="1" height="17" fill="#45b4ae"/>
<rect x="636.17" y="610" width="3.08" height="17" fill="#8fd0cb"/>
<rect x="636.17" y="610" width="1" height="17" fill="#37afa9"/>
<rect x="638.24" y="610" width="1" height="17" fill="#45b4ae"/>
<rect x="640.24" y="610" width="3.08" height="17" fill="#8fd0cb"/>
<rect x="640.24" y="610" width="1" height="17" fill="#37afa9"/>
<rect x="642.32" y="610" width="1" height="17" fill="#45b4ae"/>
<rect x="644.32" y="610" width="3.08" height="17" fill="#8fd0cb"/>
<rect x="644.32" y="610" width="1" height="17" fill="#37afa9"/>
<rect x="646.39" y="610" width="1" height="17" fill="#45b4ae"/>
<rect x="648.39" y="610" width="3.08" height="17" fill="#8fd0cb"/>
<rect x="648.39" y="610" width="1" height="17" fill="#37afa9"/>
<rect x="650.47" y="610" width="1" height="17" fill="#45b4ae"/>
<rect x="652.47" y="610" width="3.08" height="17" fill="#8fd0cb"/>
<rect x="652.47" y="610" width="1" height="17" fill="#37afa9"/>
<rect x="654.54" y="610" width="1" height="17" fill="#45b4ae"/>
<rect x="656.54" y="610" width="3.08" height="17" fill="#8fd0cb"/>
<rect x="656.54" y="610" width="1" height="17" fill="#37afa9"/>
<rect x="658.62" y="610" width="1" height="17" fill="#45b4ae"/>
<rect x="660.62" y="610" width="3.08" height="17" fill="#8fd0cb"/>
<rect x="660.62" y="610" width="1" height="17" fill="#37afa9"/>
<rect x="662.69" y="610" width="1" height="17" fill="#45b4ae"/>
<rect x="664.69" y="610" width="3.08" height="17" fill="#8fd0cb"/>
<rect x="664.69" y="610" width="1" height="17" fill="#37afa9"/>
<rect x="666.77" y="610" width="1" height="17" fill="#45b4ae"/>
<rect x="668.77" y="610" width="3.08" height="17" fill="#8fd0cb"/>
<rect x="668.77" y="610" width="1" height="17" fill="#37afa9"/>
<rect x="670.84" y="610" width="1" height="17" fill="#45b4ae"/>
<rect x="672.84" y="610" width="3.08" height="17" fill="#8fd0cb"/>
<rect x="672.84" y="610" width="1" height="17" fill="#37afa9"/>
<rect x="674.92" y="610" width="1" height="17" fill="#45b4ae"/>
<rect x="676.92" y="610" width="3.08" height="17" fill="#8fd0cb"/>
<rect x="676.92" y="610" width="1" height="17" fill="#37afa9"/>
<rect x="678.99" y="610" width="1" height="17" fill="#45b4ae"/>
<rect x="680.99" y="610" width="3.08" height="17" fill="#8fd0cb"/>
<rect x="680.99" y="610" width="1" height="17" fill="#37afa9"/>
<rect x="683.07" y="610" width="1" height="17" fill="#45b4ae"/>
<rect x="685.07" y="610" width="3.08" height="17" fill="#8fd0cb"/>
<rect x="685.07" y="610" width="1" height="17" fill="#37afa9"/>
<rect x="687.14" y="610" width="1" height="17" fill="#45b4ae"/>
<rect x="689.14" y="610" width="3.08" height="17" fill="#8fd0cb"/>
<rect x="689.14" y="610" width="1" height="17" fill="#37afa9"/>
<rect x="691.22" y="610" width="1" height="17" fill="#45b4ae"/>
<rect x="693.22" y="610" width="3.08" height="17" fill="#8fd0cb"/>
<rect x="693.22" y="610" width="1" height="17" fill="#37afa9"/>
<rect x="695.30" y="610" width="1" height="17" fill="#45b4ae"/>
<rect x="697.30" y="610" width="3.08" height="17" fill="#8fd0cb"/>
<rect x="697.30" y="610" width="1" height="17" fill="#37afa9"/>
<rect x="699.37" y="610" width="1" height="17" fill="#45b4ae"/>
<rect x="701.37" y="610" width="3.08" height="17" fill="#8fd0cb"/>
<rect x="701.37" y="610" width="1" height="17" fill="#37afa9"/>
<rect x="703.45" y="610" width="1" height="17" fill="#45b4ae"/>
<rect x="705.45" y="610" width="3.08" height="17" fill="#8fd0cb"/>
<rect x="705.45" y="610" width="1" height="17" fill="#37afa9"/>
<rect x="707.52" y="610" width="1" height="17" fill="#45b4ae"/>
<rect x="709.52" y="610" width="3.08" height="17" fill="#8fd0cb"/>
<rect x="709.52" y="610" width="1" height="17" fill="#37afa9"/>
<rect x="711.60" y="610" width="1" height="17" fill="#45b4ae"/>
<rect x="713.60" y="610" width="3.08" height="17" fill="#8fd0cb"/>
<rect x="713.60" y="610" width="1" height="17" fill="#37afa9"/>
<rect x="715.67" y="610" width="1" height="17" fill="#45b4ae"/>
<rect x="717.67" y="610" width="3.08" height="17" fill="#8fd0cb"/>
<rect x="717.67" y="610" width="1" height="17" fill="#37afa9"/>
<rect x="719.75" y="610" width="1" height="17" fill="#45b4ae"/>
<rect x="721.75" y="610" width="3.08" height="17" fill="#8fd0cb"/>
<rect x="721.75" y="610" width="1" height="17" fill="#37afa9"/>
<rect x="723.82" y="610" width="1" height="17" fill="#45b4ae"/>
<rect x="725.82" y="610" width="3.08" height="17" fill="#8fd0cb"/>
<rect x="725.82" y="610" width="1" height="17" fill="#37afa9"/>
<rect x="727.90" y="610" width="1" height="17" fill="#45b4ae"/>
<rect x="729.90" y="610" width="3.08" height="17" fill="#8fd0cb"/>
<rect x="729.90" y="610" width="1" height="17" fill="#37afa9"/>
<rect x="731.97" y="610" width="1" height="17" fill="#45b4ae"/>
<rect x="733.97" y="610" width="3.08" height="17" fill="#8fd0cb"/>
<rect x="733.97" y="610" width="1" height="17" fill="#37afa9"/>
<rect x="736.05" y="610" width="1" height="17" fill="#45b4ae"/>
<rect x="738.05" y="610" width="3.08" height="17" fill="#8fd0cb"/>
<rect x="738.05" y="610" width="1" height="17" fill="#37afa9"/>
<rect x="740.12" y="610" width="1" height="17" fill="#45b4ae"/>
<rect x="742.12" y="610" width="3.08" height="17" fill="#8fd0cb"/>
<rect x="742.12" y="610" width="1" height="17" fill="#37afa9"/>
<rect x="744.20" y="610" width="1" height="17" fill="#45b4ae"/>
<rect x="754.20" y="610" width="3.00" height="17" fill="#8fd0cb"/>
<rect x="754.20" y="610" width="1" height="17" fill="#37afa9"/>
<rect x="756.20" y="610" width="1" height="17" fill="#45b4ae"/>
<rect x="758.20" y="610" width="3.00" height="17" fill="#8fd0cb"/>
<rect x="758.20" y="610" width="1" height="17" fill="#37afa9"/>
<rect x="760.20" y="610" width="1" height="17" fill="#45b4ae"/>
<rect x="762.20" y="610" width="3.00" height="17" fill="#8fd0cb"/>
<rect x="762.20" y="610" width="1" height="17" fill="#37afa9"/>
<rect x="764.20" y="610" width="1" height="17" fill="#45b4ae"/>
<rect x="766.20" y="610" width="3.00" height="17" fill="#8fd0cb"/>
<rect x="766.20" y="610" width="1" height="17" fill="#37afa9"/>
<rect x="768.20" y="610" width="1" height="17" fill="#45b4ae"/>
<rect x="770.20" y="610" width="3.00" height="17" fill="#8fd0cb"/>
<rect x="770.20" y="610" width="1" height="17" fill="#37afa9"/>
<rect x="772.20" y="610" width="1" height="17" fill="#45b4ae"/>
<rect x="774.20" y="610" width="3.00" height="17" fill="#8fd0cb"/>
<rect x="774.20" y="610" width="1" height="17" fill="#37afa9"/>
<rect x="776.20" y="610" width="1" height="17" fill="#45b4ae"/>
<rect x="778.20" y="610" width="3.00" height="17" fill="#8fd0cb"/>
<rect x="778.20" y="610" width="1" height="17" fill="#37afa9"/>
<rect x="780.20" y="610" width="1" height="17" fill="#45b4ae"/>
<rect x="782.20" y="610" width="3.00" height="17" fill="#8fd0cb"/>
<rect x="782.20" y="610" width="1" height="17" fill="#37afa9"/>
<rect x="784.20" y="610" width="1" height="17" fill="#45b4ae"/>
<rect x="786.20" y="610" width="3.00" height="17" fill="#8fd0cb"/>
<rect x="786.20" y="610" width="1" height="17" fill="#37afa9"/>
<rect x="788.20" y="610" width="1" height="17" fill="#45b4ae"/>
<rect x="790.20" y="610" width="3.00" height="17" fill="#8fd0cb"/>
<rect x="790.20" y="610" width="1" height="17" fill="#37afa9"/>
<rect x="792.20" y="610" width="1" height="17" fill="#45b4ae"/>
<rect x="794.20" y="610" width="3.00" height="17" fill="#8fd0cb"/>
<rect x="794.20" y="610" width="1" height="17" fill="#37afa9"/>
<rect x="796.20" y="610" width="1" height="17" fill="#45b4ae"/>
<rect x="798.20" y="610" width="3.00" height="17" fill="#8fd0cb"/>
<rect x="798.20" y="610" width="1" height="17" fill="#37afa9"/>
<rect x="800.20" y="610" width="1" height="17" fill="#45b4ae"/>
<rect x="802.20" y="610" width="3.00" height="17" fill="#8fd0cb"/>
<rect x="802.20" y="610" width="1" height="17" fill="#37afa9"/>
<rect x="804.20" y="610" width="1" height="17" fill="#45b4ae"/>
<rect x="806.20" y="610" width="3.00" height="17" fill="#8fd0cb"/>
<rect x="806.20" y="610" width="1" height="17" fill="#37afa9"/>
<rect x="808.20" y="610" width="1" height="17" fill="#45b4ae"/>
<rect x="810.20" y="610" width="3.00" height="17" fill="#8fd0cb"/>
<rect x="810.20" y="610" width="1" height="17" fill="#37afa9"/>
<rect x="812.20" y="610" width="1" height="17" fill="#45b4ae"/>
<rect x="814.20" y="610" width="3.00" height="17" fill="#8fd0cb"/>
<rect x="814.20" y="610" width="1" height="17" fill="#37afa9"/>
<rect x="816.20" y="610" width="1" height="17" fill="#45b4ae"/>
<rect x="818.20" y="610" width="3.00" height="17" fill="#8fd0cb"/>
<rect x="818.20" y="610" width="1" height="17" fill="#37afa9"/>
<rect x="820.20" y="610" width="1" height="17" fill="#45b4ae"/>
<rect x="822.20" y="610" width="3.00" height="17" fill="#8fd0cb"/>
<rect x="822.20" y="610" width="1" height="17" fill="#37afa9"/>
<rect x="824.20" y="610" width="1" height="17" fill="#45b4ae"/>
<rect x="826.20" y="610" width="3.00" height="17" fill="#8fd0cb"/>
<rect x="826.20" y="610" width="1" height="17" fill="#37afa9"/>
<rect x="828.20" y="610" width="1" height="17" fill="#45b4ae"/>
<rect x="830.20" y="610" width="3.00" height="17" fill="#8fd0cb"/>
<rect x="830.20" y="610" width="1" height="17" fill="#37afa9"/>
<rect x="832.20" y="610" width="1" height="17" fill="#45b4ae"/>
<rect x="834.20" y="610" width="3.00" height="17" fill="#8fd0cb"/>
<rect x="834.20" y="610" width="1" height="17" fill="#37afa9"/>
<rect x="836.20" y="610" width="1" height="17" fill="#45b4ae"/>
<rect x="838.20" y="610" width="3.00" height="17" fill="#8fd0cb"/>
<rect x="838.20" y="610" width="1" height="17" fill="#37afa9"/>
<rect x="840.20" y="610" width="1" height="17" fill="#45b4ae"/>
<rect x="842.20" y="610" width="3.00" height="17" fill="#8fd0cb"/>
<rect x="842.20" y="610" width="1" height="17" fill="#37afa9"/>
<rect x="844.20" y="610" width="1" height="17" fill="#45b4ae"/>
<rect x="854.00" y="610" width="2.98" height="17" fill="#8fd0cb"/>
<rect x="854.00" y="610" width="1" height="17" fill="#37afa9"/>
<rect x="855.98" y="610" width="1" height="17" fill="#45b4ae"/>
<rect x="857.98" y="610" width="2.98" height="17" fill="#8fd0cb"/>
<rect x="857.98" y="610" width="1" height="17" fill="#37afa9"/>
<rect x="859.96" y="610" width="1" height="17" fill="#45b4ae"/>
<rect x="861.96" y="610" width="2.98" height="17" fill="#8fd0cb"/>
<rect x="861.96" y="610" width="1" height="17" fill="#37afa9"/>
<rect x="863.93" y="610" width="1" height="17" fill="#45b4ae"/>
<rect x="865.93" y="610" width="2.98" height="17" fill="#8fd0cb"/>
<rect x="865.93" y="610" width="1" height="17" fill="#37afa9"/>
<rect x="867.91" y="610" width="1" height="17" fill="#45b4ae"/>
<rect x="869.91" y="610" width="2.98" height="17" fill="#8fd0cb"/>
<rect x="869.91" y="610" width="1" height="17" fill="#37afa9"/>
<rect x="871.89" y="610" width="1" height="17" fill="#45b4ae"/>
<rect x="873.89" y="610" width="2.98" height="17" fill="#8fd0cb"/>
<rect x="873.89" y="610" width="1" height="17" fill="#37afa9"/>
<rect x="875.87" y="610" width="1" height="17" fill="#45b4ae"/>
<rect x="877.87" y="610" width="2.98" height="17" fill="#8fd0cb"/>
<rect x="877.87" y="610" width="1" height="17" fill="#37afa9"/>
<rect x="879.85" y="610" width="1" height="17" fill="#45b4ae"/>
<rect x="881.85" y="610" width="2.98" height="17" fill="#8fd0cb"/>
<rect x="881.85" y="610" width="1" height="17" fill="#37afa9"/>
<rect x="883.83" y="610" width="1" height="17" fill="#45b4ae"/>
<rect x="885.83" y="610" width="2.98" height="17" fill="#8fd0cb"/>
<rect x="885.83" y="610" width="1" height="17" fill="#37afa9"/>
<rect x="887.80" y="610" width="1" height="17" fill="#45b4ae"/>
<rect x="889.80" y="610" width="2.98" height="17" fill="#8fd0cb"/>
<rect x="889.80" y="610" width="1" height="17" fill="#37afa9"/>
<rect x="891.78" y="610" width="1" height="17" fill="#45b4ae"/>
<rect x="893.78" y="610" width="2.98" height="17" fill="#8fd0cb"/>
<rect x="893.78" y="610" width="1" height="17" fill="#37afa9"/>
<rect x="895.76" y="610" width="1" height="17" fill="#45b4ae"/>
<rect x="897.76" y="610" width="2.98" height="17" fill="#8fd0cb"/>
<rect x="897.76" y="610" width="1" height="17" fill="#37afa9"/>
<rect x="899.74" y="610" width="1" height="17" fill="#45b4ae"/>
<rect x="901.74" y="610" width="2.98" height="17" fill="#8fd0cb"/>
<rect x="901.74" y="610" width="1" height="17" fill="#37afa9"/>
<rect x="903.72" y="610" width="1" height="17" fill="#45b4ae"/>
<rect x="905.72" y="610" width="2.98" height="17" fill="#8fd0cb"/>
<rect x="905.72" y="610" width="1" height="17" fill="#37afa9"/>
<rect x="907.70" y="610" width="1" height="17" fill="#45b4ae"/>
<rect x="909.70" y="610" width="2.98" height="17" fill="#8fd0cb"/>
<rect x="909.70" y="610" width="1" height="17" fill="#37afa9"/>
<rect x="911.67" y="610" width="1" height="17" fill="#45b4ae"/>
<rect x="913.67" y="610" width="2.98" height="17" fill="#8fd0cb"/>
<rect x="913.67" y="610" width="1" height="17" fill="#37afa9"/>
<rect x="915.65" y="610" width="1" height="17" fill="#45b4ae"/>
<rect x="917.65" y="610" width="2.98" height="17" fill="#8fd0cb"/>
<rect x="917.65" y="610" width="1" height="17" fill="#37afa9"/>
<rect x="919.63" y="610" width="1" height="17" fill="#45b4ae"/>
<rect x="921.63" y="610" width="2.98" height="17" fill="#8fd0cb"/>
<rect x="921.63" y="610" width="1" height="17" fill="#37afa9"/>
<rect x="923.61" y="610" width="1" height="17" fill="#45b4ae"/>
<rect x="925.61" y="610" width="2.98" height="17" fill="#8fd0cb"/>
<rect x="925.61" y="610" width="1" height="17" fill="#37afa9"/>
<rect x="927.59" y="610" width="1" height="17" fill="#45b4ae"/>
<rect x="929.59" y="610" width="2.98" height="17" fill="#8fd0cb"/>
<rect x="929.59" y="610" width="1" height="17" fill="#37afa9"/>
<rect x="931.57" y="610" width="1" height="17" fill="#45b4ae"/>
<rect x="933.57" y="610" width="2.98" height="17" fill="#8fd0cb"/>
<rect x="933.57" y="610" width="1" height="17" fill="#37afa9"/>
<rect x="935.54" y="610" width="1" height="17" fill="#45b4ae"/>
<rect x="937.54" y="610" width="2.98" height="17" fill="#8fd0cb"/>
<rect x="937.54" y="610" width="1" height="17" fill="#37afa9"/>
<rect x="939.52" y="610" width="1" height="17" fill="#45b4ae"/>
<rect x="941.52" y="610" width="2.98" height="17" fill="#8fd0cb"/>
<rect x="941.52" y="610" width="1" height="17" fill="#37afa9"/>
<rect x="943.50" y="610" width="1" height="17" fill="#45b4ae"/>
<rect x="953.00" y="610" width="2.97" height="17" fill="#8fd0cb"/>
<rect x="953.00" y="610" width="1" height="17" fill="#37afa9"/>
<rect x="954.97" y="610" width="1" height="17" fill="#45b4ae"/>
<rect x="956.97" y="610" width="2.97" height="17" fill="#8fd0cb"/>
<rect x="956.97" y="610" width="1" height="17" fill="#37afa9"/>
<rect x="958.95" y="610" width="1" height="17" fill="#45b4ae"/>
<rect x="960.95" y="610" width="2.97" height="17" fill="#8fd0cb"/>
<rect x="960.95" y="610" width="1" height="17" fill="#37afa9"/>
<rect x="962.92" y="610" width="1" height="17" fill="#45b4ae"/>
<rect x="964.92" y="610" width="2.97" height="17" fill="#8fd0cb"/>
<rect x="964.92" y="610" width="1" height="17" fill="#37afa9"/>
<rect x="966.89" y="610" width="1" height="17" fill="#45b4ae"/>
<rect x="968.89" y="610" width="2.97" height="17" fill="#8fd0cb"/>
<rect x="968.89" y="610" width="1" height="17" fill="#37afa9"/>
<rect x="970.86" y="610" width="1" height="17" fill="#45b4ae"/>
<rect x="972.86" y="610" width="2.97" height="17" fill="#8fd0cb"/>
<rect x="972.86" y="610" width="1" height="17" fill="#37afa9"/>
<rect x="974.84" y="610" width="1" height="17" fill="#45b4ae"/>
<rect x="976.84" y="610" width="2.97" height="17" fill="#8fd0cb"/>
<rect x="976.84" y="610" width="1" height="17" fill="#37afa9"/>
<rect x="978.81" y="610" width="1" height="17" fill="#45b4ae"/>
<rect x="980.81" y="610" width="2.97" height="17" fill="#8fd0cb"/>
<rect x="980.81" y="610" width="1" height="17" fill="#37afa9"/>
<rect x="982.78" y="610" width="1" height="17" fill="#45b4ae"/>
<rect x="984.78" y="610" width="2.97" height="17" fill="#8fd0cb"/>
<rect x="984.78" y="610" width="1" height="17" fill="#37afa9"/>
<rect x="986.75" y="610" width="1" height="17" fill="#45b4ae"/>
<rect x="988.75" y="610" width="2.97" height="17" fill="#8fd0cb"/>
<rect x="988.75" y="610" width="1" height="17" fill="#37afa9"/>
<rect x="990.73" y="610" width="1" height="17" fill="#45b4ae"/>
<rect x="992.73" y="610" width="2.97" height="17" fill="#8fd0cb"/>
<rect x="992.73" y="610" width="1" height="17" fill="#37afa9"/>
<rect x="994.70" y="610" width="1" height="17" fill="#45b4ae"/>
<rect x="996.70" y="610" width="2.97" height="17" fill="#8fd0cb"/>
<rect x="996.70" y="610" width="1" height="17" fill="#37afa9"/>
<rect x="998.67" y="610" width="1" height="17" fill="#45b4ae"/>
<rect x="1000.67" y="610" width="2.97" height="17" fill="#8fd0cb"/>
<rect x="1000.67" y="610" width="1" height="17" fill="#37afa9"/>
<rect x="1002.65" y="610" width="1" height="17" fill="#45b4ae"/>
<rect x="1004.65" y="610" width="2.97" height="17" fill="#8fd0cb"/>
<rect x="1004.65" y="610" width="1" height="17" fill="#37afa9"/>
<rect x="1006.62" y="610" width="1" height="17" fill="#45b4ae"/>
<rect x="1008.62" y="610" width="2.97" height="17" fill="#8fd0cb"/>
<rect x="1008.62" y="610" width="1" height="17" fill="#37afa9"/>
<rect x="1010.59" y="610" width="1" height="17" fill="#45b4ae"/>
<rect x="1012.59" y="610" width="2.97" height="17" fill="#8fd0cb"/>
<rect x="1012.59" y="610" width="1" height="17" fill="#37afa9"/>
<rect x="1014.56" y="610" width="1" height="17" fill="#45b4ae"/>
<rect x="1016.56" y="610" width="2.97" height="17" fill="#8fd0cb"/>
<rect x="1016.56" y="610" width="1" height="17" fill="#37afa9"/>
<rect x="1018.54" y="610" width="1" height="17" fill="#45b4ae"/>
<rect x="1020.54" y="610" width="2.97" height="17" fill="#8fd0cb"/>
<rect x="1020.54" y="610" width="1" height="17" fill="#37afa9"/>
<rect x="1022.51" y="610" width="1" height="17" fill="#45b4ae"/>
<rect x="1024.51" y="610" width="2.97" height="17" fill="#8fd0cb"/>
<rect x="1024.51" y="610" width="1" height="17" fill="#37afa9"/>
<rect x="1026.48" y="610" width="1" height="17" fill="#45b4ae"/>
<rect x="1028.48" y="610" width="2.97" height="17" fill="#8fd0cb"/>
<rect x="1028.48" y="610" width="1" height="17" fill="#37afa9"/>
<rect x="1030.45" y="610" width="1" height="17" fill="#45b4ae"/>
<rect x="1032.45" y="610" width="2.97" height="17" fill="#8fd0cb"/>
<rect x="1032.45" y="610" width="1" height="17" fill="#37afa9"/>
<rect x="1034.43" y="610" width="1" height="17" fill="#45b4ae"/>
<rect x="1036.43" y="610" width="2.97" height="17" fill="#8fd0cb"/>
<rect x="1036.43" y="610" width="1" height="17" fill="#37afa9"/>
<rect x="1038.40" y="610" width="1" height="17" fill="#45b4ae"/>
<rect x="365.00" y="628" width="2.99" height="17" fill="#a9dcd8"/>
<rect x="365.00" y="628" width="1" height="17" fill="#37afa9"/>
<rect x="368.99" y="628" width="2.99" height="17" fill="#a9dcd8"/>
<rect x="368.99" y="628" width="1" height="17" fill="#37afa9"/>
<rect x="372.98" y="628" width="2.99" height="17" fill="#a9dcd8"/>
<rect x="372.98" y="628" width="1" height="17" fill="#37afa9"/>
<rect x="376.97" y="628" width="2.99" height="17" fill="#a9dcd8"/>
<rect x="376.97" y="628" width="1" height="17" fill="#37afa9"/>
<rect x="380.97" y="628" width="2.99" height="17" fill="#a9dcd8"/>
<rect x="380.97" y="628" width="1" height="17" fill="#37afa9"/>
<rect x="384.96" y="628" width="2.99" height="17" fill="#a9dcd8"/>
<rect x="384.96" y="628" width="1" height="17" fill="#37afa9"/>
<rect x="388.95" y="628" width="2.99" height="17" fill="#a9dcd8"/>
<rect x="388.95" y="628" width="1" height="17" fill="#37afa9"/>
<rect x="392.94" y="628" width="2.99" height="17" fill="#a9dcd8"/>
<rect x="392.94" y="628" width="1" height="17" fill="#37afa9"/>
<rect x="396.93" y="628" width="2.99" height="17" fill="#a9dcd8"/>
<rect x="396.93" y="628" width="1" height="17" fill="#37afa9"/>
<rect x="400.92" y="628" width="2.99" height="17" fill="#a9dcd8"/>
<rect x="400.92" y="628" width="1" height="17" fill="#37afa9"/>
<rect x="404.91" y="628" width="2.99" height="17" fill="#a9dcd8"/>
<rect x="404.91" y="628" width="1" height="17" fill="#37afa9"/>
<rect x="408.90" y="628" width="2.99" height="17" fill="#a9dcd8"/>
<rect x="408.90" y="628" width="1" height="17" fill="#37afa9"/>
<rect x="412.90" y="628" width="2.99" height="17" fill="#a9dcd8"/>
<rect x="412.90" y="628" width="1" height="17" fill="#37afa9"/>
<rect x="416.89" y="628" width="2.99" height="17" fill="#a9dcd8"/>
<rect x="416.89" y="628" width="1" height="17" fill="#37afa9"/>
<rect x="420.88" y="628" width="2.99" height="17" fill="#a9dcd8"/>
<rect x="420.88" y="628" width="1" height="17" fill="#37afa9"/>
<rect x="424.87" y="628" width="2.99" height="17" fill="#a9dcd8"/>
<rect x="424.87" y="628" width="1" height="17" fill="#37afa9"/>
<rect x="428.86" y="628" width="2.99" height="17" fill="#a9dcd8"/>
<rect x="428.86" y="628" width="1" height="17" fill="#37afa9"/>
<rect x="432.85" y="628" width="2.99" height="17" fill="#a9dcd8"/>
<rect x="432.85" y="628" width="1" height="17" fill="#37afa9"/>
<rect x="436.84" y="628" width="2.99" height="17" fill="#a9dcd8"/>
<rect x="436.84" y="628" width="1" height="17" fill="#37afa9"/>
<rect x="440.83" y="628" width="2.99" height="17" fill="#a9dcd8"/>
<rect x="440.83" y="628" width="1" height="17" fill="#37afa9"/>
<rect x="444.83" y="628" width="2.99" height="17" fill="#a9dcd8"/>
<rect x="444.83" y="628" width="1" height="17" fill="#37afa9"/>
<rect x="448.82" y="628" width="2.99" height="17" fill="#a9dcd8"/>
<rect x="448.82" y="628" width="1" height="17" fill="#37afa9"/>
<rect x="452.81" y="628" width="2.99" height="17" fill="#a9dcd8"/>
<rect x="452.81" y="628" width="1" height="17" fill="#37afa9"/>
<rect x="463.20" y="628" width="3.03" height="17" fill="#a9dcd8"/>
<rect x="463.20" y="628" width="1" height="17" fill="#37afa9"/>
<rect x="467.23" y="628" width="3.03" height="17" fill="#a9dcd8"/>
<rect x="467.23" y="628" width="1" height="17" fill="#37afa9"/>
<rect x="471.26" y="628" width="3.03" height="17" fill="#a9dcd8"/>
<rect x="471.26" y="628" width="1" height="17" fill="#37afa9"/>
<rect x="475.29" y="628" width="3.03" height="17" fill="#a9dcd8"/>
<rect x="475.29" y="628" width="1" height="17" fill="#37afa9"/>
<rect x="479.32" y="628" width="3.03" height="17" fill="#a9dcd8"/>
<rect x="479.32" y="628" width="1" height="17" fill="#37afa9"/>
<rect x="483.35" y="628" width="3.03" height="17" fill="#a9dcd8"/>
<rect x="483.35" y="628" width="1" height="17" fill="#37afa9"/>
<rect x="487.38" y="628" width="3.03" height="17" fill="#a9dcd8"/>
<rect x="487.38" y="628" width="1" height="17" fill="#37afa9"/>
<rect x="491.41" y="628" width="3.03" height="17" fill="#a9dcd8"/>
<rect x="491.41" y="628" width="1" height="17" fill="#37afa9"/>
<rect x="495.44" y="628" width="3.03" height="17" fill="#a9dcd8"/>
<rect x="495.44" y="628" width="1" height="17" fill="#37afa9"/>
<rect x="499.47" y="628" width="3.03" height="17" fill="#a9dcd8"/>
<rect x="499.47" y="628" width="1" height="17" fill="#37afa9"/>
<rect x="503.50" y="628" width="3.03" height="17" fill="#a9dcd8"/>
<rect x="503.50" y="628" width="1" height="17" fill="#37afa9"/>
<rect x="507.53" y="628" width="3.03" height="17" fill="#a9dcd8"/>
<rect x="507.53" y="628" width="1" height="17" fill="#37afa9"/>
<rect x="511.56" y="628" width="3.03" height="17" fill="#a9dcd8"/>
<rect x="511.56" y="628" width="1" height="17" fill="#37afa9"/>
<rect x="515.59" y="628" width="3.03" height="17" fill="#a9dcd8"/>
<rect x="515.59" y="628" width="1" height="17" fill="#37afa9"/>
<rect x="519.62" y="628" width="3.03" height="17" fill="#a9dcd8"/>
<rect x="519.62" y="628" width="1" height="17" fill="#37afa9"/>
<rect x="523.65" y="628" width="3.03" height="17" fill="#a9dcd8"/>
<rect x="523.65" y="628" width="1" height="17" fill="#37afa9"/>
<rect x="527.68" y="628" width="3.03" height="17" fill="#a9dcd8"/>
<rect x="527.68" y="628" width="1" height="17" fill="#37afa9"/>
<rect x="531.71" y="628" width="3.03" height="17" fill="#a9dcd8"/>
<rect x="531.71" y="628" width="1" height="17" fill="#37afa9"/>
<rect x="535.74" y="628" width="3.03" height="17" fill="#a9dcd8"/>
<rect x="535.74" y="628" width="1" height="17" fill="#37afa9"/>
<rect x="539.77" y="628" width="3.03" height="17" fill="#a9dcd8"/>
<rect x="539.77" y="628" width="1" height="17" fill="#37afa9"/>
<rect x="543.80" y="628" width="3.03" height="17" fill="#a9dcd8"/>
<rect x="543.80" y="628" width="1" height="17" fill="#37afa9"/>
<rect x="547.83" y="628" width="3.03" height="17" fill="#a9dcd8"/>
<rect x="547.83" y="628" width="1" height="17" fill="#37afa9"/>
<rect x="551.86" y="628" width="3.03" height="17" fill="#a9dcd8"/>
<rect x="551.86" y="628" width="1" height="17" fill="#37afa9"/>
<rect x="555.89" y="628" width="3.03" height="17" fill="#a9dcd8"/>
<rect x="555.89" y="628" width="1" height="17" fill="#37afa9"/>
<rect x="559.92" y="628" width="3.03" height="17" fill="#a9dcd8"/>
<rect x="559.92" y="628" width="1" height="17" fill="#37afa9"/>
<rect x="563.95" y="628" width="3.03" height="17" fill="#a9dcd8"/>
<rect x="563.95" y="628" width="1" height="17" fill="#37afa9"/>
<rect x="567.98" y="628" width="3.03" height="17" fill="#a9dcd8"/>
<rect x="567.98" y="628" width="1" height="17" fill="#37afa9"/>
<rect x="572.01" y="628" width="3.03" height="17" fill="#a9dcd8"/>
<rect x="572.01" y="628" width="1" height="17" fill="#37afa9"/>
<rect x="576.04" y="628" width="3.03" height="17" fill="#a9dcd8"/>
<rect x="576.04" y="628" width="1" height="17" fill="#37afa9"/>
<rect x="580.07" y="628" width="3.03" height="17" fill="#a9dcd8"/>
<rect x="580.07" y="628" width="1" height="17" fill="#37afa9"/>
<rect x="584.10" y="628" width="3.03" height="17" fill="#a9dcd8"/>
<rect x="584.10" y="628" width="1" height="17" fill="#37afa9"/>
<rect x="588.13" y="628" width="3.03" height="17" fill="#a9dcd8"/>
<rect x="588.13" y="628" width="1" height="17" fill="#37afa9"/>
<rect x="592.16" y="628" width="3.03" height="17" fill="#a9dcd8"/>
<rect x="592.16" y="628" width="1" height="17" fill="#37afa9"/>
<rect x="596.19" y="628" width="3.03" height="17" fill="#a9dcd8"/>
<rect x="596.19" y="628" width="1" height="17" fill="#37afa9"/>
<rect x="600.22" y="628" width="3.03" height="17" fill="#a9dcd8"/>
<rect x="600.22" y="628" width="1" height="17" fill="#37afa9"/>
<rect x="604.25" y="628" width="3.03" height="17" fill="#a9dcd8"/>
<rect x="604.25" y="628" width="1" height="17" fill="#37afa9"/>
<rect x="608.28" y="628" width="3.03" height="17" fill="#a9dcd8"/>
<rect x="608.28" y="628" width="1" height="17" fill="#37afa9"/>
<rect x="612.31" y="628" width="3.03" height="17" fill="#a9dcd8"/>
<rect x="612.31" y="628" width="1" height="17" fill="#37afa9"/>
<rect x="616.34" y="628" width="3.03" height="17" fill="#a9dcd8"/>
<rect x="616.34" y="628" width="1" height="17" fill="#37afa9"/>
<rect x="620.37" y="628" width="3.03" height="17" fill="#a9dcd8"/>
<rect x="620.37" y="628" width="1" height="17" fill="#37afa9"/>
<rect x="624.40" y="628" width="3.03" height="17" fill="#a9dcd8"/>
<rect x="624.40" y="628" width="1" height="17" fill="#37afa9"/>
<rect x="628.43" y="628" width="3.03" height="17" fill="#a9dcd8"/>
<rect x="628.43" y="628" width="1" height="17" fill="#37afa9"/>
<rect x="632.46" y="628" width="3.03" height="17" fill="#a9dcd8"/>
<rect x="632.46" y="628" width="1" height="17" fill="#37afa9"/>
<rect x="636.49" y="628" width="3.03" height="17" fill="#a9dcd8"/>
<rect x="636.49" y="628" width="1" height="17" fill="#37afa9"/>
<rect x="640.52" y="628" width="3.03" height="17" fill="#a9dcd8"/>
<rect x="640.52" y="628" width="1" height="17" fill="#37afa9"/>
<rect x="644.55" y="628" width="3.03" height="17" fill="#a9dcd8"/>
<rect x="644.55" y="628" width="1" height="17" fill="#37afa9"/>
<rect x="648.58" y="628" width="3.03" height="17" fill="#a9dcd8"/>
<rect x="648.58" y="628" width="1" height="17" fill="#37afa9"/>
<rect x="652.61" y="628" width="3.03" height="17" fill="#a9dcd8"/>
<rect x="652.61" y="628" width="1" height="17" fill="#37afa9"/>
<rect x="656.64" y="628" width="3.03" height="17" fill="#a9dcd8"/>
<rect x="656.64" y="628" width="1" height="17" fill="#37afa9"/>
<rect x="660.67" y="628" width="3.03" height="17" fill="#a9dcd8"/>
<rect x="660.67" y="628" width="1" height="17" fill="#37afa9"/>
<rect x="664.70" y="628" width="3.03" height="17" fill="#a9dcd8"/>
<rect x="664.70" y="628" width="1" height="17" fill="#37afa9"/>
<rect x="668.73" y="628" width="3.03" height="17" fill="#a9dcd8"/>
<rect x="668.73" y="628" width="1" height="17" fill="#37afa9"/>
<rect x="672.76" y="628" width="3.03" height="17" fill="#a9dcd8"/>
<rect x="672.76" y="628" width="1" height="17" fill="#37afa9"/>
<rect x="676.79" y="628" width="3.03" height="17" fill="#a9dcd8"/>
<rect x="676.79" y="628" width="1" height="17" fill="#37afa9"/>
<rect x="680.82" y="628" width="3.03" height="17" fill="#a9dcd8"/>
<rect x="680.82" y="628" width="1" height="17" fill="#37afa9"/>
<rect x="684.85" y="628" width="3.03" height="17" fill="#a9dcd8"/>
<rect x="684.85" y="628" width="1" height="17" fill="#37afa9"/>
<rect x="688.88" y="628" width="3.03" height="17" fill="#a9dcd8"/>
<rect x="688.88" y="628" width="1" height="17" fill="#37afa9"/>
<rect x="692.91" y="628" width="3.03" height="17" fill="#a9dcd8"/>
<rect x="692.91" y="628" width="1" height="17" fill="#37afa9"/>
<rect x="696.94" y="628" width="3.03" height="17" fill="#a9dcd8"/>
<rect x="696.94" y="628" width="1" height="17" fill="#37afa9"/>
<rect x="700.97" y="628" width="3.03" height="17" fill="#a9dcd8"/>
<rect x="700.97" y="628" width="1" height="17" fill="#37afa9"/>
<rect x="705.00" y="628" width="3.03" height="17" fill="#a9dcd8"/>
<rect x="705.00" y="628" width="1" height="17" fill="#37afa9"/>
<rect x="709.03" y="628" width="3.03" height="17" fill="#a9dcd8"/>
<rect x="709.03" y="628" width="1" height="17" fill="#37afa9"/>
<rect x="713.06" y="628" width="3.03" height="17" fill="#a9dcd8"/>
<rect x="713.06" y="628" width="1" height="17" fill="#37afa9"/>
<rect x="717.09" y="628" width="3.03" height="17" fill="#a9dcd8"/>
<rect x="717.09" y="628" width="1" height="17" fill="#37afa9"/>
<rect x="721.12" y="628" width="3.03" height="17" fill="#a9dcd8"/>
<rect x="721.12" y="628" width="1" height="17" fill="#37afa9"/>
<rect x="725.15" y="628" width="3.03" height="17" fill="#a9dcd8"/>
<rect x="725.15" y="628" width="1" height="17" fill="#37afa9"/>
<rect x="729.18" y="628" width="3.03" height="17" fill="#a9dcd8"/>
<rect x="729.18" y="628" width="1" height="17" fill="#37afa9"/>
<rect x="733.21" y="628" width="3.03" height="17" fill="#a9dcd8"/>
<rect x="733.21" y="628" width="1" height="17" fill="#37afa9"/>
<rect x="737.24" y="628" width="3.03" height="17" fill="#a9dcd8"/>
<rect x="737.24" y="628" width="1" height="17" fill="#37afa9"/>
<rect x="741.27" y="628" width="3.03" height="17" fill="#a9dcd8"/>
<rect x="741.27" y="628" width="1" height="17" fill="#37afa9"/>
<rect x="752.20" y="628" width="3.09" height="17" fill="#a9dcd8"/>
<rect x="752.20" y="628" width="1" height="17" fill="#37afa9"/>
<rect x="756.29" y="628" width="3.09" height="17" fill="#a9dcd8"/>
<rect x="756.29" y="628" width="1" height="17" fill="#37afa9"/>
<rect x="760.37" y="628" width="3.09" height="17" fill="#a9dcd8"/>
<rect x="760.37" y="628" width="1" height="17" fill="#37afa9"/>
<rect x="764.46" y="628" width="3.09" height="17" fill="#a9dcd8"/>
<rect x="764.46" y="628" width="1" height="17" fill="#37afa9"/>
<rect x="768.55" y="628" width="3.09" height="17" fill="#a9dcd8"/>
<rect x="768.55" y="628" width="1" height="17" fill="#37afa9"/>
<rect x="772.63" y="628" width="3.09" height="17" fill="#a9dcd8"/>
<rect x="772.63" y="628" width="1" height="17" fill="#37afa9"/>
<rect x="776.72" y="628" width="3.09" height="17" fill="#a9dcd8"/>
<rect x="776.72" y="628" width="1" height="17" fill="#37afa9"/>
<rect x="780.81" y="628" width="3.09" height="17" fill="#a9dcd8"/>
<rect x="780.81" y="628" width="1" height="17" fill="#37afa9"/>
<rect x="784.90" y="628" width="3.09" height="17" fill="#a9dcd8"/>
<rect x="784.90" y="628" width="1" height="17" fill="#37afa9"/>
<rect x="788.98" y="628" width="3.09" height="17" fill="#a9dcd8"/>
<rect x="788.98" y="628" width="1" height="17" fill="#37afa9"/>
<rect x="793.07" y="628" width="3.09" height="17" fill="#a9dcd8"/>
<rect x="793.07" y="628" width="1" height="17" fill="#37afa9"/>
<rect x="797.16" y="628" width="3.09" height="17" fill="#a9dcd8"/>
<rect x="797.16" y="628" width="1" height="17" fill="#37afa9"/>
<rect x="801.24" y="628" width="3.09" height="17" fill="#a9dcd8"/>
<rect x="801.24" y="628" width="1" height="17" fill="#37afa9"/>
<rect x="805.33" y="628" width="3.09" height="17" fill="#a9dcd8"/>
<rect x="805.33" y="628" width="1" height="17" fill="#37afa9"/>
<rect x="809.42" y="628" width="3.09" height="17" fill="#a9dcd8"/>
<rect x="809.42" y="628" width="1" height="17" fill="#37afa9"/>
<rect x="813.50" y="628" width="3.09" height="17" fill="#a9dcd8"/>
<rect x="813.50" y="628" width="1" height="17" fill="#37afa9"/>
<rect x="817.59" y="628" width="3.09" height="17" fill="#a9dcd8"/>
<rect x="817.59" y="628" width="1" height="17" fill="#37afa9"/>
<rect x="821.68" y="628" width="3.09" height="17" fill="#a9dcd8"/>
<rect x="821.68" y="628" width="1" height="17" fill="#37afa9"/>
<rect x="825.77" y="628" width="3.09" height="17" fill="#a9dcd8"/>
<rect x="825.77" y="628" width="1" height="17" fill="#37afa9"/>
<rect x="829.85" y="628" width="3.09" height="17" fill="#a9dcd8"/>
<rect x="829.85" y="628" width="1" height="17" fill="#37afa9"/>
<rect x="833.94" y="628" width="3.09" height="17" fill="#a9dcd8"/>
<rect x="833.94" y="628" width="1" height="17" fill="#37afa9"/>
<rect x="838.03" y="628" width="3.09" height="17" fill="#a9dcd8"/>
<rect x="838.03" y="628" width="1" height="17" fill="#37afa9"/>
<rect x="842.11" y="628" width="3.09" height="17" fill="#a9dcd8"/>
<rect x="842.11" y="628" width="1" height="17" fill="#37afa9"/>
<rect x="854.00" y="628" width="2.98" height="17" fill="#a9dcd8"/>
<rect x="854.00" y="628" width="1" height="17" fill="#37afa9"/>
<rect x="857.98" y="628" width="2.98" height="17" fill="#a9dcd8"/>
<rect x="857.98" y="628" width="1" height="17" fill="#37afa9"/>
<rect x="861.96" y="628" width="2.98" height="17" fill="#a9dcd8"/>
<rect x="861.96" y="628" width="1" height="17" fill="#37afa9"/>
<rect x="865.93" y="628" width="2.98" height="17" fill="#a9dcd8"/>
<rect x="865.93" y="628" width="1" height="17" fill="#37afa9"/>
<rect x="869.91" y="628" width="2.98" height="17" fill="#a9dcd8"/>
<rect x="869.91" y="628" width="1" height="17" fill="#37afa9"/>
<rect x="873.89" y="628" width="2.98" height="17" fill="#a9dcd8"/>
<rect x="873.89" y="628" width="1" height="17" fill="#37afa9"/>
<rect x="877.87" y="628" width="2.98" height="17" fill="#a9dcd8"/>
<rect x="877.87" y="628" width="1" height="17" fill="#37afa9"/>
<rect x="881.85" y="628" width="2.98" height="17" fill="#a9dcd8"/>
<rect x="881.85" y="628" width="1" height="17" fill="#37afa9"/>
<rect x="885.83" y="628" width="2.98" height="17" fill="#a9dcd8"/>
<rect x="885.83" y="628" width="1" height="17" fill="#37afa9"/>
<rect x="889.80" y="628" width="2.98" height="17" fill="#a9dcd8"/>
<rect x="889.80" y="628" width="1" height="17" fill="#37afa9"/>
<rect x="893.78" y="628" width="2.98" height="17" fill="#a9dcd8"/>
<rect x="893.78" y="628" width="1" height="17" fill="#37afa9"/>
<rect x="897.76" y="628" width="2.98" height="17" fill="#a9dcd8"/>
<rect x="897.76" y="628" width="1" height="17" fill="#37afa9"/>
<rect x="901.74" y="628" width="2.98" height="17" fill="#a9dcd8"/>
<rect x="901.74" y="628" width="1" height="17" fill="#37afa9"/>
<rect x="905.72" y="628" width="2.98" height="17" fill="#a9dcd8"/>
<rect x="905.72" y="628" width="1" height="17" fill="#37afa9"/>
<rect x="909.70" y="628" width="2.98" height="17" fill="#a9dcd8"/>
<rect x="909.70" y="628" width="1" height="17" fill="#37afa9"/>
<rect x="913.67" y="628" width="2.98" height="17" fill="#a9dcd8"/>
<rect x="913.67" y="628" width="1" height="17" fill="#37afa9"/>
<rect x="917.65" y="628" width="2.98" height="17" fill="#a9dcd8"/>
<rect x="917.65" y="628" width="1" height="17" fill="#37afa9"/>
<rect x="921.63" y="628" width="2.98" height="17" fill="#a9dcd8"/>
<rect x="921.63" y="628" width="1" height="17" fill="#37afa9"/>
<rect x="925.61" y="628" width="2.98" height="17" fill="#a9dcd8"/>
<rect x="925.61" y="628" width="1" height="17" fill="#37afa9"/>
<rect x="929.59" y="628" width="2.98" height="17" fill="#a9dcd8"/>
<rect x="929.59" y="628" width="1" height="17" fill="#37afa9"/>
<rect x="933.57" y="628" width="2.98" height="17" fill="#a9dcd8"/>
<rect x="933.57" y="628" width="1" height="17" fill="#37afa9"/>
<rect x="937.54" y="628" width="2.98" height="17" fill="#a9dcd8"/>
<rect x="937.54" y="628" width="1" height="17" fill="#37afa9"/>
<rect x="941.52" y="628" width="2.98" height="17" fill="#a9dcd8"/>
<rect x="941.52" y="628" width="1" height="17" fill="#37afa9"/>
<rect x="953.00" y="628" width="2.97" height="17" fill="#a9dcd8"/>
<rect x="953.00" y="628" width="1" height="17" fill="#37afa9"/>
<rect x="956.97" y="628" width="2.97" height="17" fill="#a9dcd8"/>
<rect x="956.97" y="628" width="1" height="17" fill="#37afa9"/>
<rect x="960.95" y="628" width="2.97" height="17" fill="#a9dcd8"/>
<rect x="960.95" y="628" width="1" height="17" fill="#37afa9"/>
<rect x="964.92" y="628" width="2.97" height="17" fill="#a9dcd8"/>
<rect x="964.92" y="628" width="1" height="17" fill="#37afa9"/>
<rect x="968.89" y="628" width="2.97" height="17" fill="#a9dcd8"/>
<rect x="968.89" y="628" width="1" height="17" fill="#37afa9"/>
<rect x="972.86" y="628" width="2.97" height="17" fill="#a9dcd8"/>
<rect x="972.86" y="628" width="1" height="17" fill="#37afa9"/>
<rect x="976.84" y="628" width="2.97" height="17" fill="#a9dcd8"/>
<rect x="976.84" y="628" width="1" height="17" fill="#37afa9"/>
<rect x="980.81" y="628" width="2.97" height="17" fill="#a9dcd8"/>
<rect x="980.81" y="628" width="1" height="17" fill="#37afa9"/>
<rect x="984.78" y="628" width="2.97" height="17" fill="#a9dcd8"/>
<rect x="984.78" y="628" width="1" height="17" fill="#37afa9"/>
<rect x="988.75" y="628" width="2.97" height="17" fill="#a9dcd8"/>
<rect x="988.75" y="628" width="1" height="17" fill="#37afa9"/>
<rect x="992.73" y="628" width="2.97" height="17" fill="#a9dcd8"/>
<rect x="992.73" y="628" width="1" height="17" fill="#37afa9"/>
<rect x="996.70" y="628" width="2.97" height="17" fill="#a9dcd8"/>
<rect x="996.70" y="628" width="1" height="17" fill="#37afa9"/>
<rect x="1000.67" y="628" width="2.97" height="17" fill="#a9dcd8"/>
<rect x="1000.67" y="628" width="1" height="17" fill="#37afa9"/>
<rect x="1004.65" y="628" width="2.97" height="17" fill="#a9dcd8"/>
<rect x="1004.65" y="628" width="1" height="17" fill="#37afa9"/>
<rect x="1008.62" y="628" width="2.97" height="17" fill="#a9dcd8"/>
<rect x="1008.62" y="628" width="1" height="17" fill="#37afa9"/>
<rect x="1012.59" y="628" width="2.97" height="17" fill="#a9dcd8"/>
<rect x="1012.59" y="628" width="1" height="17" fill="#37afa9"/>
<rect x="1016.56" y="628" width="2.97" height="17" fill="#a9dcd8"/>
<rect x="1016.56" y="628" width="1" height="17" fill="#37afa9"/>
<rect x="1020.54" y="628" width="2.97" height="17" fill="#a9dcd8"/>
<rect x="1020.54" y="628" width="1" height="17" fill="#37afa9"/>
<rect x="1024.51" y="628" width="2.97" height="17" fill="#a9dcd8"/>
<rect x="1024.51" y="628" width="1" height="17" fill="#37afa9"/>
<rect x="1028.48" y="628" width="2.97" height="17" fill="#a9dcd8"/>
<rect x="1028.48" y="628" width="1" height="17" fill="#37afa9"/>
<rect x="1032.45" y="628" width="2.97" height="17" fill="#a9dcd8"/>
<rect x="1032.45" y="628" width="1" height="17" fill="#37afa9"/>
<rect x="1036.43" y="628" width="2.97" height="17" fill="#a9dcd8"/>
<rect x="1036.43" y="628" width="1" height="17" fill="#37afa9"/>
<rect x="363.1" y="610" width="3.9" height="17" fill="#63b19e"/>
<rect x="456.8" y="610" width="7.2" height="17" fill="#97b488"/>
<rect x="746.2" y="610" width="7" height="17" fill="#97b488"/>
<rect x="846.2" y="610" width="6.6" height="17" fill="#37afa9"/>
<rect x="846.2" y="628" width="6.6" height="17" fill="#37afa9"/>
<rect x="945.5" y="610" width="6.6" height="17" fill="#37afa9"/>
<rect x="945.5" y="628" width="6.6" height="17" fill="#37afa9"/>
<rect x="847.2" y="646" width="4.8" height="17" fill="#97b488"/>
<rect x="947.2" y="646" width="4.8" height="17" fill="#97b488"/>
</g>
<!-- tooltip -->
<rect x="724" y="509" width="175" height="55" rx="4.5" fill="rgba(0,0,0,0.93)"/>
<text x="732.5" y="527" class="mono" font-size="11" font-weight="bold" fill="#fff">EffectInRenderBadExample</text>
<rect x="732.5" y="533" width="158.5" height="2" fill="#8d8a86"/>
<text x="732.3" y="553.8" font-size="12" fill="#fff" style="letter-spacing:0.2px"><tspan font-weight="bold">Duration:</tspan> 0.1ms of 177.4ms</text>
</g>
</svg>
</body></html>
